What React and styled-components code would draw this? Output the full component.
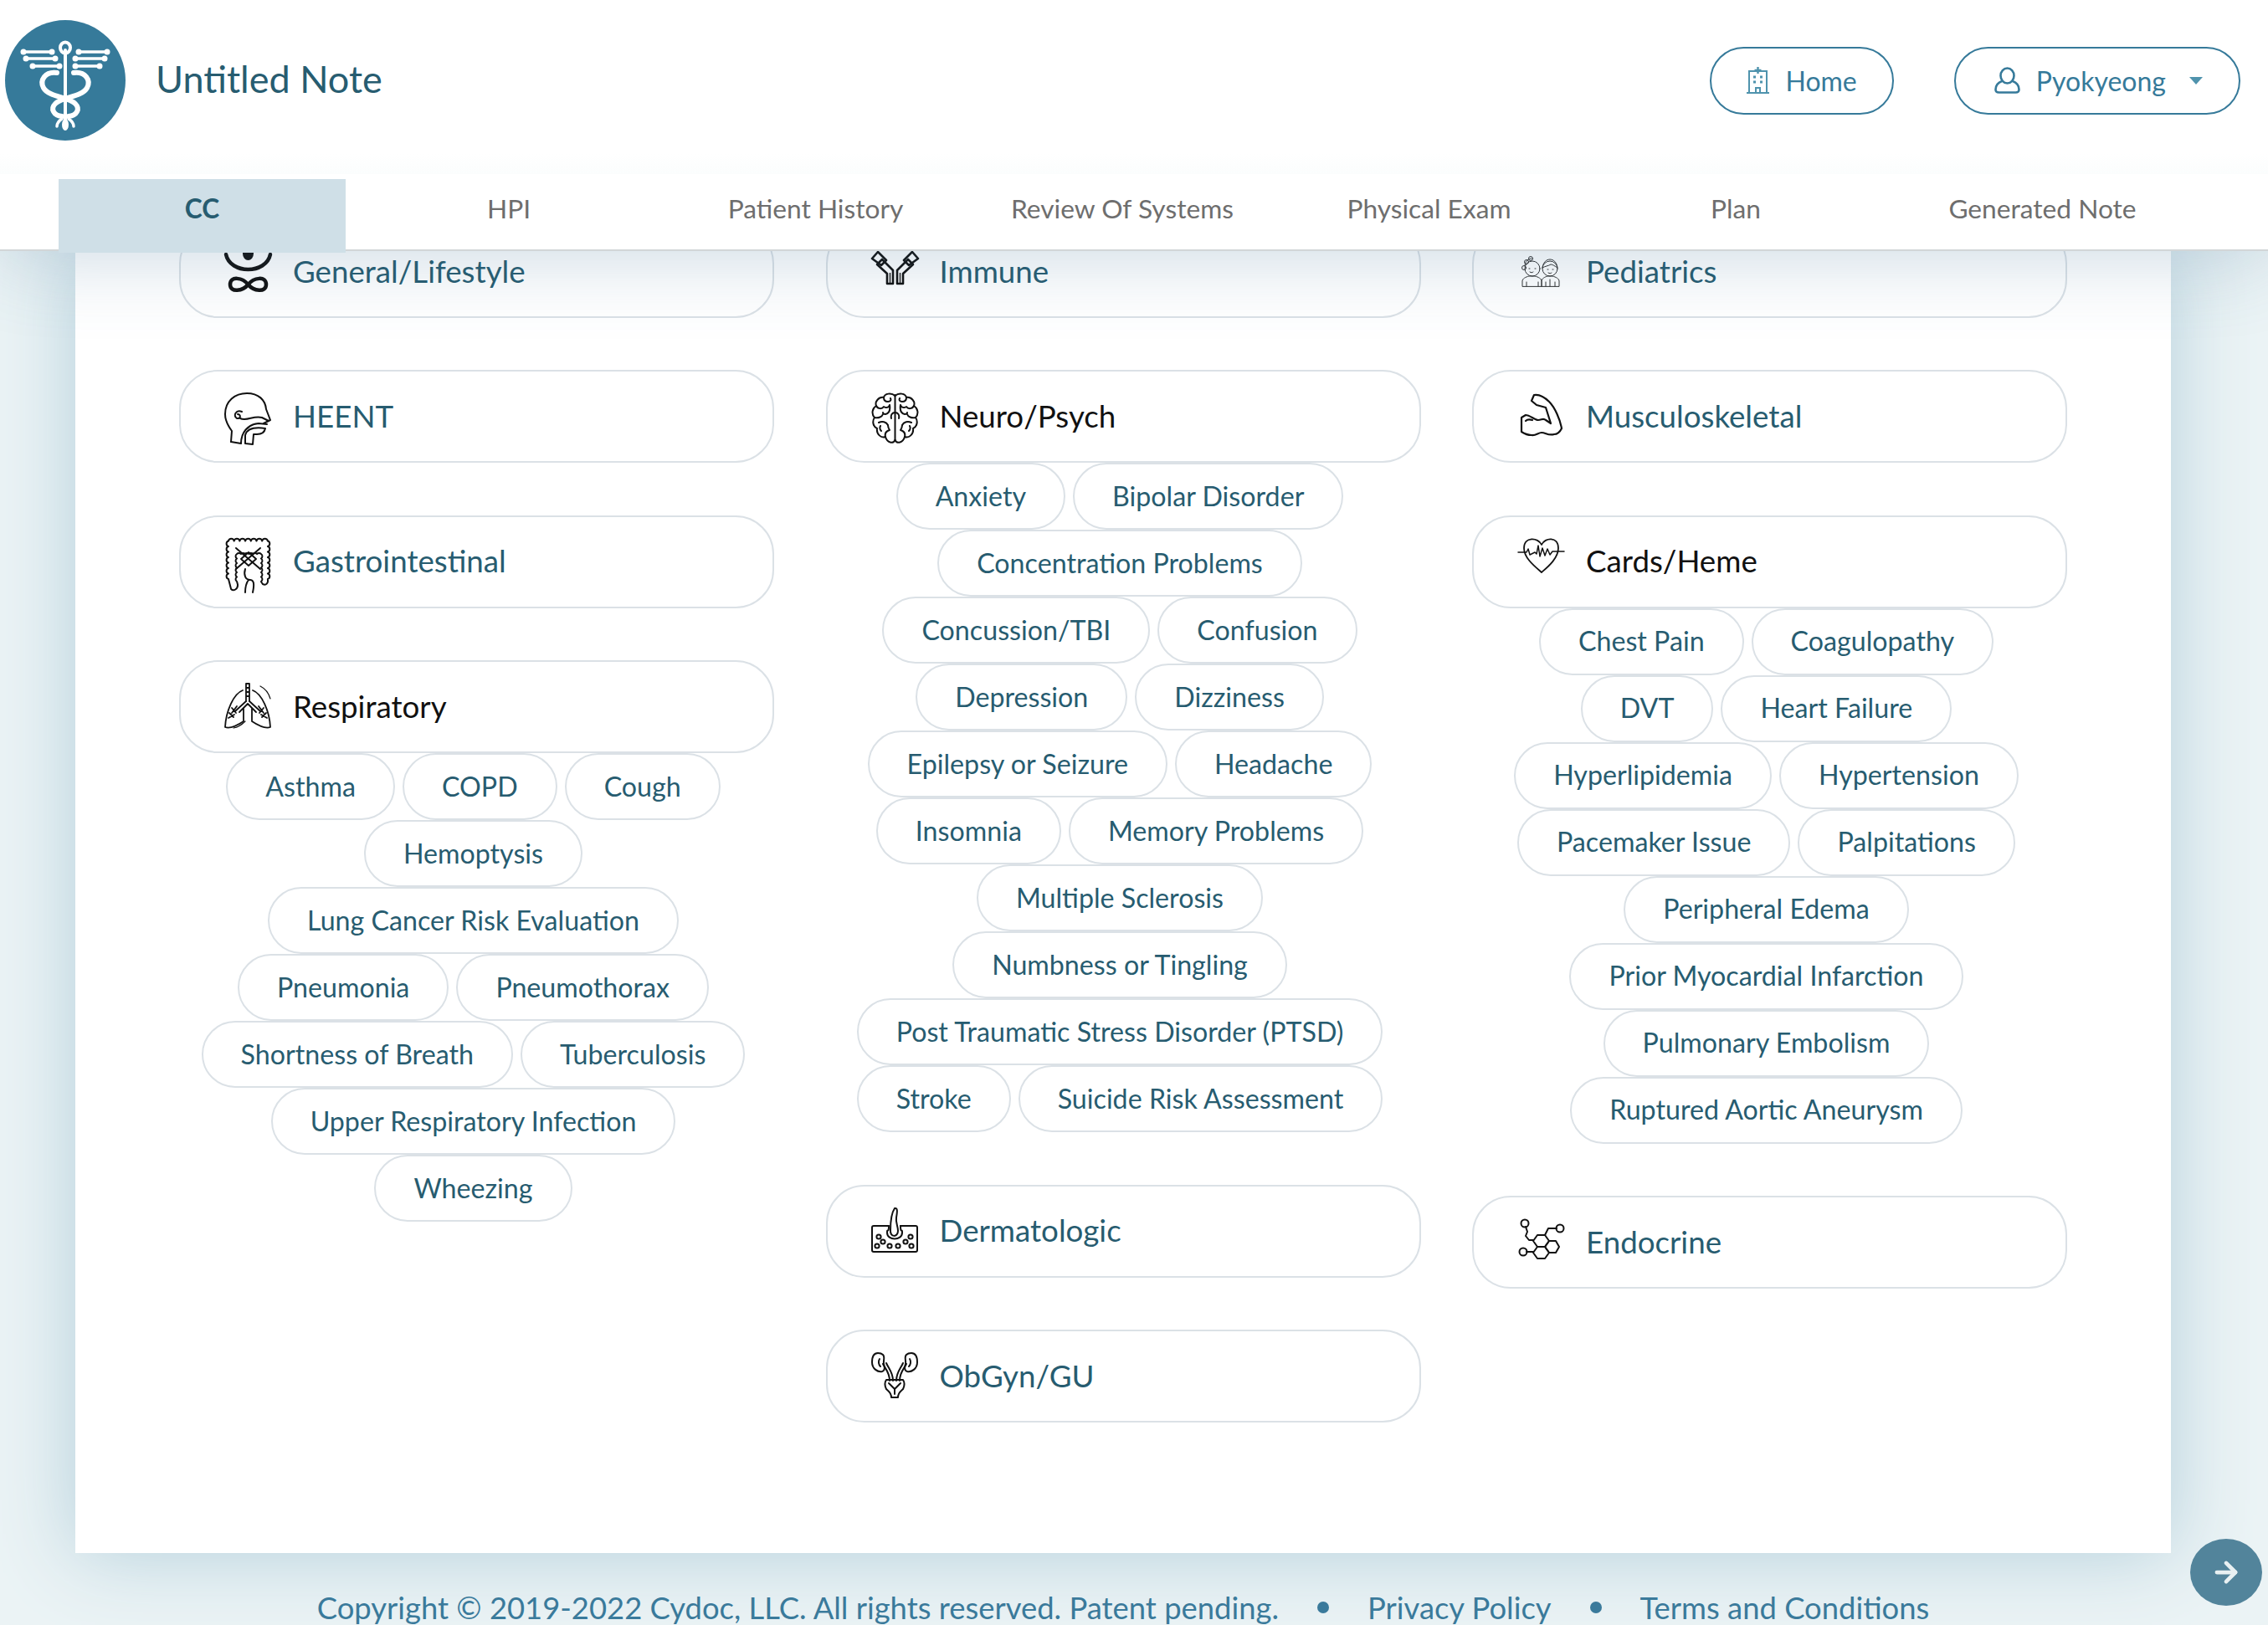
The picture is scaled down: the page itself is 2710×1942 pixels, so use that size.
import React from 'react';
import styled, { createGlobalStyle } from 'styled-components';
import { ArrowRight } from 'lucide-react';

const GlobalStyle = createGlobalStyle`
  html, body {
    margin: 0;
    padding: 0;
    background: #ebf3f5;
    font-family: "Lato", "Open Sans", sans-serif;
  }
`;

const Page = styled.div`
  position: relative;
  display: flex;
  flex-direction: column;
  height: 1942px;
  overflow: hidden;
  background: #ebf3f5;
`;

const Top = styled.header`
  position: relative;
  z-index: 2;
  background: #fff;
  border-bottom: 2px solid #d2d6d8;
  box-shadow: 0 0 100px rgba(60, 110, 150, 0.3);
`;

const Brand = styled.div`
  display: flex;
  align-items: center;
  height: 208px;
  padding: 0 33px 16px 6px;
  box-sizing: border-box;
  background: linear-gradient(#fff 88%, #fbfdfd);
`;

const Title = styled.div`
  margin: 0 auto 4px 36px;
  font-size: 45px;
  color: #275c70;
  white-space: nowrap;
`;

const NavButton = styled.button`
  display: flex;
  align-items: center;
  height: 81px;
  margin-left: ${(p) => p.$gap}px;
  padding: 0 ${(p) => p.$right}px 0 ${(p) => p.$left}px;
  box-sizing: border-box;
  background: #fff;
  border: 2px solid #367a9a;
  border-radius: 41px;
  font: inherit;
  font-size: 32px;
  color: #367a9a;
`;

const NavLabel = styled.span`
  margin-left: 19px;
`;

const Caret = styled.span`
  width: 0;
  height: 0;
  margin-left: 28px;
  border-left: 8px solid transparent;
  border-right: 8px solid transparent;
  border-top: 9px solid #4f93ad;
`;

const TabBar = styled.nav`
  display: grid;
  grid-template-columns: repeat(7, 343px);
  column-gap: 23.5px;
  height: 90px;
  padding-left: 70px;
`;

const Tab = styled.div`
  display: flex;
  align-items: center;
  justify-content: center;
  height: 88px;
  margin-top: 6px;
  padding-bottom: 19px;
  box-sizing: border-box;
  font-size: 31.7px;
  font-weight: ${(p) => (p.$active ? 700 : 400)};
  color: ${(p) => (p.$active ? '#275c70' : '#6e6e6e')};
  background: ${(p) => (p.$active ? '#cfdfe7' : 'transparent')};
`;

const Body = styled.main`
  padding: 0 116px 0 90px;
`;

const Panel = styled.section`
  display: grid;
  grid-template-columns: repeat(3, 711px);
  column-gap: 61.5px;
  height: 1556px;
  padding: 0 124px;
  box-sizing: border-box;
  background: #fff;
  box-shadow: 0 0 90px #b3cfdb;
  overflow: hidden;
`;

const Column = styled.div`
  display: flex;
  flex-direction: column;
  margin-top: -31px;
`;

const Group = styled.div`
  margin-bottom: 62.4px;
`;

const Category = styled.div`
  display: flex;
  align-items: center;
  height: 111px;
  padding: 0 0 2px 53px;
  box-sizing: border-box;
  border: 2px solid #dbe1e6;
  border-radius: 46px;
  font-size: 36.7px;
  color: ${(p) => (p.$open ? '#111' : '#275c70')};
`;

const IconBox = styled.svg`
  flex: none;
  width: 55px;
  height: 66px;
  margin: 11px 26px 0 0;
  overflow: visible;
  fill: none;
  stroke: #111;
  stroke-width: 2;
  stroke-linecap: round;
  stroke-linejoin: round;
`;

const ChipRow = styled.div`
  display: flex;
  justify-content: center;
  gap: 9px;
  padding-right: 8px;
`;

const Chip = styled.div`
  display: flex;
  align-items: center;
  height: 80px;
  padding: 0 45px 2px;
  box-sizing: border-box;
  border: 2px solid #dbe1e6;
  border-radius: 40px;
  font-size: 32.2px;
  color: #275c70;
  white-space: nowrap;
`;

const Footer = styled.footer`
  display: flex;
  align-items: center;
  justify-content: center;
  gap: 46px;
  padding: 44px 116px 0 90px;
  font-size: 36.4px;
  line-height: 42px;
  color: #3a7a9b;
  white-space: nowrap;
`;

const Dot = styled.span`
  width: 14px;
  height: 14px;
  border-radius: 50%;
  background: #3a7a9b;
`;

const NextButton = styled.button`
  position: absolute;
  left: 2617px;
  top: 1839px;
  display: flex;
  align-items: center;
  justify-content: center;
  width: 86px;
  height: 80px;
  padding: 0;
  border: none;
  border-radius: 50%;
  background: #52849b;
  color: #e8f0f2;
`;

const LogoMark = styled.svg`
  flex: none;
  width: 144px;
  height: 144px;
`;

const Logo = () => (
  <LogoMark viewBox="0 0 144 144">
    <circle cx="72" cy="72" r="72" fill="#367a9a" />
    <g stroke="#fff" fill="none" strokeLinecap="round">
      <path d="M72 36v92" strokeWidth="4" />
      <ellipse cx="72" cy="33" rx="6" ry="6.5" strokeWidth="4" />
      <path d="M22 38h34M25 46h35M33 55h32M88 38h34M84 46h35M84 55h29" strokeWidth="3.5" />
      <g fill="#fff" stroke="none">
        <circle cx="22" cy="38" r="3.5" /><circle cx="56" cy="38" r="3.5" />
        <circle cx="25" cy="46" r="3.5" /><circle cx="60" cy="46" r="3.5" />
        <circle cx="33" cy="55" r="3.5" /><circle cx="65" cy="55" r="3.5" />
        <circle cx="88" cy="38" r="3.5" /><circle cx="122" cy="38" r="3.5" />
        <circle cx="84" cy="46" r="3.5" /><circle cx="119" cy="46" r="3.5" />
        <circle cx="84" cy="55" r="3.5" /><circle cx="113" cy="55" r="3.5" />
      </g>
      <path d="M62 63C48 61 41 72 46 81C52 92 76 92 84 100C90 106 86 114 76 115" strokeWidth="6" />
      <path d="M82 63C96 61 103 72 98 81C92 92 68 92 60 100C54 106 58 114 68 115" strokeWidth="6" />
      <path d="M62 127c0-4 3-7 6-9M82 127c0-4-3-7-6-9" strokeWidth="3.5" />
    </g>
    <ellipse cx="72" cy="125" rx="4" ry="7" fill="#fff" />
  </LogoMark>
);

const HospitalIcon = () => (
  <svg width="27" height="32" viewBox="0 0 27 32" fill="none" stroke="#4f93ad" strokeWidth="2">
    <path d="M3 31V5h21v26M0 31h27M11 31v-6h5v6" />
    <path d="M13.5 0v8M9.5 4h8" strokeWidth="2.4" />
    <path d="M8 12h3M16 12h3M8 18h3M16 18h3" strokeWidth="3" />
  </svg>
);

const UserIcon = () => (
  <svg width="31" height="32" viewBox="0 0 31 32" fill="none" stroke="#367a9a" strokeWidth="2.6">
    <ellipse cx="15.5" cy="10.5" rx="8" ry="9" />
    <path d="M9 17C4 19 1.500 22 1.500 27c0 2.500 1.500 3.500 4 3.500h20c2.500 0 4-1 4-3.500 0-5-2.500-8-7.500-10" />
  </svg>
);

const scallops = (arc, count) => arc.repeat(count);

const brainHalf = (
  <>
    <path d="M27.500 4C23 0 15 1 14 6C8 5 3 11 5 16C0 19 -1 26 3 30C0 34 1 41 6 43C5 50 11 55 16 53C18 60 25 62 27.500 57" />
    <path d="M14 6C14 9 16 11 19 11C22 11 23 9 22 7M5 16C7 20 12 20 14 17C17 19 20 18 21 15M21 15C22 21 20 25 16 26C14 26 13 25 13 24M3 30C8 31 12 29 13 26M8 36C12 34 17 35 19 39M16 53C15 49 17 46 21 45C19 42 19 41 19 39M27.500 24C24 24 22 27 23 31M11 46C9 44 9 42 10 40" />
  </>
);

const icons = {
  general: (
    <g>
      <ellipse cx="27.500" cy="7" rx="6.500" ry="8" fill="#111" stroke="none" />
      <path d="M1 8C6 32 49 32 54 8" strokeWidth="4.500" />
      <path d="M27.500 44C21 36 6 33 6 44C6 54 21 52 27.500 44C34 36 49 33 49 44C49 54 34 52 27.500 44Z" strokeWidth="4.500" />
    </g>
  ),
  immune: (
    <g strokeWidth="2.600" strokeLinecap="butt">
      <path d="M18 43h7V27L12 14L6 20L18 31Z" />
      <path d="M37 43h-7V27L43 14L49 20L37 31Z" />
      <path d="M21.500 43V30M33.500 43V30" strokeWidth="1.400" />
      <path d="M0 13L7 5L17 15L11 21Z" />
      <path d="M55 13L48 5L38 15L44 21Z" />
    </g>
  ),
  pediatrics: (
    <g strokeWidth="1" stroke="#333">
      <circle cx="17" cy="25" r="9" />
      <path d="M8 22c0-6 4-9 8-9" />
      <circle cx="15" cy="13" r="2.500" /><circle cx="10" cy="17" r="2.500" /><circle cx="7" cy="24" r="2.500" />
      <path d="M13 25h1M20 25h1M14 29c1.500 1 3 1 4 0" />
      <path d="M5 46V40c0-3 4-5 8-6h7c4 1 8 3 8 6v6zM10 46v-5M24 46v-5" />
      <circle cx="38" cy="25" r="9" />
      <path d="M29 24c1-7 5-10 9-10s8 3 9 10c-3-2-6-4-8-4-3 2-7 2-10 4z" />
      <path d="M35 26h1M41 26h1M36 30c1.500 1 3 1 4 0" />
      <path d="M28 46V40c0-3 4-5 7-6h6c4 1 8 3 8 6v6zM38 38v8M33 46v-5M44 46v-5" />
    </g>
  ),
  heent: (
    <g>
      <path d="M7 59L8 46C2 38 0 32 0 26C0 10 12 1 26 1C40 1 48 9 49 20L54 33L46 37" />
      <path d="M7 59L19 61C19 48 27 38 40 37L50 38" />
      <path d="M18 31C26 35 34 27 44 30L52 34" />
      <path d="M24 61V51C26 44 34 41 48 43C47 48 44 50 38 50H34L33 62Z" />
      <path d="M20 23C13 20 9 28 14 31C19 32 19 26 15 26" />
    </g>
  ),
  gastro: (
    <g strokeWidth="2">
      <path d={`M4 49${scallops('a3.400 3.400 0 0 1 0-6.500', 7)}${scallops('a3.400 3.400 0 0 1 6.700 0', 7)}${scallops('a3.400 3.400 0 0 1 0 6.500', 7)}c1 5-2 8-6 6l-2-3${scallops('a3.200 3.200 0 0 0 0-5.500', 6)}${scallops('a3.200 3.200 0 0 0-4.800 0', 6)}${scallops('a3.200 3.200 0 0 0 0 5.500', 6)}l1 4c0 5-5 8-8 5z`} />
      <path d="M13 12L42 37M42 12L13 37M19 25L28 17L37 25L28 33Z" />
      <path d="M24 37C22 44 24 50 30 50C36 50 34 60 33 65M28 50C25 54 24 60 24 65" />
    </g>
  ),
  respiratory: (
    <g strokeWidth="1.800">
      <path d="M25 22V1h4v21M25 6h4M25 11h4M25 16h4" />
      <path d="M21 9C10 13 1 34 0 53C6 55 16 50 22 46V31" />
      <path d="M33 9C44 13 53 34 54 53C48 55 38 50 32 46V31" />
      <path d="M25 22L12 34M29 22L42 34M27 25L17 35M27 25L37 35" />
      <path d="M14 28L8 36M8 30L13 36M5 36L10 41M4 42L11 38" />
      <path d="M40 28L46 36M46 30L41 36M49 36L44 41M50 42L43 38" />
      <path d="M42 4C48 7 52 12 54 19M10 54C16 53 20 50 24 46" strokeWidth="1.200" />
    </g>
  ),
  neuro: (
    <g strokeWidth="2">
      <path d="M27.500 3V57" />
      {brainHalf}
      <g transform="translate(55 0) scale(-1 1)">{brainHalf}</g>
    </g>
  ),
  muscle: (
    <g strokeWidth="2.200">
      <path d="M4 47V30L9 27C14 27 20 33 24 33C28 33 30 30 33 33L39 37L33 18L22 15L16 10L19 3C25 2 31 5 37 11C44 18 50 32 52 43C50 47 47 50 43 50C36 52 33 48 28 48C24 48 21 52 16 51C11 51 7 49 4 47Z" />
      <path d="M9 34C11 32 14 32 17 33" />
    </g>
  ),
  cards: (
    <g strokeWidth="1.800">
      <path d="M28 8C24 -1 7 -2 7 12C7 24 20 34 28 41C36 34 48 24 48 12C48 -2 32 -1 28 8Z" />
      <path d="M0 17H10L12 13L14 20L20 17L22 19L24 9L26 22L29 12L32 21L35 13L38 20L41 16H55" strokeWidth="1.500" />
    </g>
  ),
  derm: (
    <g strokeWidth="2">
      <path d="M20 22H2C1 22 0 23 0 24V51C0 52 1 53 2 53H52C53 53 54 52 54 51V24C54 23 53 22 52 22H34" />
      <path d="M20 22C20 32 18 24 18 30C18 40 36 40 36 30C36 24 34 32 34 22" />
      <path d="M22 27C22 15 23 7 27 1C31 0 30 6 29 12C28 18 31 22 31 28C31 36 21 36 22 27Z" />
      <circle cx="8" cy="35" r="2.600" /><circle cx="13" cy="41" r="2.600" /><circle cx="6" cy="46" r="2.600" />
      <circle cx="21" cy="46" r="2.600" /><circle cx="31" cy="46" r="2.600" /><circle cx="40" cy="41" r="2.600" />
      <circle cx="46" cy="35" r="2.600" /><circle cx="47" cy="46" r="2.600" />
    </g>
  ),
  obgyn: (
    <g strokeWidth="2">
      <path d="M13 14C16 20 21 24 21 34M41 14C38 20 33 24 33 34M17 13C20 20 25 24 25 34M37 13C34 20 29 24 29 34" />
      <path d="M7 1C1 1 0 8 0 12C0 20 7 24 12 23C16 22 15 17 14 14C13 11 16 6 13 3C12 2 9 1 7 1Z" />
      <path d="M47 1C53 1 54 8 54 12C54 20 47 24 42 23C38 22 39 17 40 14C41 11 38 6 41 3C42 2 45 1 47 1Z" />
      <path d="M9 8C7 11 8 15 10 17M45 8C47 11 46 15 44 17" />
      <path d="M17 33H37C39 36 39 40 37 44C34 47 31 48 31 54H23C23 48 20 47 17 44C15 40 15 36 17 33Z" />
      <path d="M20 37L27 44L34 37M27 44V50" />
    </g>
  ),
  endocrine: (
    <g strokeWidth="2">
      <circle cx="8" cy="6" r="4.500" /><circle cx="50" cy="12" r="4.500" /><circle cx="6" cy="40" r="4.500" />
      <path d="M23 20H32L37 27L32 34H23L18 27Z" />
      <path d="M32 34L37 27H45L49 34L45 41H37Z" />
      <path d="M23 34H32L37 41L32 48H23L18 41Z" />
      <path d="M9 10L11 16L9 21L13 26H18M32 20L36 12H46M10 40H18" />
    </g>
  ),
};

const columns = [
  [
    { name: 'General/Lifestyle', icon: 'general' },
    { name: 'HEENT', icon: 'heent' },
    { name: 'Gastrointestinal', icon: 'gastro' },
    {
      name: 'Respiratory',
      icon: 'respiratory',
      rows: [
        ['Asthma', 'COPD', 'Cough'],
        ['Hemoptysis'],
        ['Lung Cancer Risk Evaluation'],
        ['Pneumonia', 'Pneumothorax'],
        ['Shortness of Breath', 'Tuberculosis'],
        ['Upper Respiratory Infection'],
        ['Wheezing'],
      ],
    },
  ],
  [
    { name: 'Immune', icon: 'immune' },
    {
      name: 'Neuro/Psych',
      icon: 'neuro',
      rows: [
        ['Anxiety', 'Bipolar Disorder'],
        ['Concentration Problems'],
        ['Concussion/TBI', 'Confusion'],
        ['Depression', 'Dizziness'],
        ['Epilepsy or Seizure', 'Headache'],
        ['Insomnia', 'Memory Problems'],
        ['Multiple Sclerosis'],
        ['Numbness or Tingling'],
        ['Post Traumatic Stress Disorder (PTSD)'],
        ['Stroke', 'Suicide Risk Assessment'],
      ],
    },
    { name: 'Dermatologic', icon: 'derm' },
    { name: 'ObGyn/GU', icon: 'obgyn' },
  ],
  [
    { name: 'Pediatrics', icon: 'pediatrics' },
    { name: 'Musculoskeletal', icon: 'muscle' },
    {
      name: 'Cards/Heme',
      icon: 'cards',
      rows: [
        ['Chest Pain', 'Coagulopathy'],
        ['DVT', 'Heart Failure'],
        ['Hyperlipidemia', 'Hypertension'],
        ['Pacemaker Issue', 'Palpitations'],
        ['Peripheral Edema'],
        ['Prior Myocardial Infarction'],
        ['Pulmonary Embolism'],
        ['Ruptured Aortic Aneurysm'],
      ],
    },
    { name: 'Endocrine', icon: 'endocrine' },
  ],
];

const tabs = ['CC', 'HPI', 'Patient History', 'Review Of Systems', 'Physical Exam', 'Plan', 'Generated Note'];

const App = () => {
  return (
    <Page>
      <GlobalStyle />
      <Top>
        <Brand>
          <Logo />
          <Title>Untitled Note</Title>
          <NavButton $gap={0} $left={42} $right={42}>
            <HospitalIcon />
            <NavLabel>Home</NavLabel>
          </NavButton>
          <NavButton $gap={72} $left={46} $right={43}>
            <UserIcon />
            <NavLabel>Pyokyeong</NavLabel>
            <Caret />
          </NavButton>
        </Brand>
        <TabBar>
          {tabs.map((tab, i) => (
            <Tab key={tab} $active={i === 0}>{tab}</Tab>
          ))}
        </TabBar>
      </Top>
      <Body>
        <Panel>
          {columns.map((groups, c) => (
            <Column key={c}>
              {groups.map((group) => (
                <Group key={group.name}>
                  <Category $open={!!group.rows}>
                    <IconBox viewBox="0 0 55 66">{icons[group.icon]}</IconBox>
                    {group.name}
                  </Category>
                  {group.rows && group.rows.map((row) => (
                    <ChipRow key={row[0]}>
                      {row.map((item) => <Chip key={item}>{item}</Chip>)}
                    </ChipRow>
                  ))}
                </Group>
              ))}
            </Column>
          ))}
        </Panel>
      </Body>
      <Footer>
        <span>Copyright © 2019-2022 Cydoc, LLC. All rights reserved. Patent pending.</span>
        <Dot />
        <span>Privacy Policy</span>
        <Dot />
        <span>Terms and Conditions</span>
      </Footer>
      <NextButton>
        <ArrowRight size={38} strokeWidth={3} />
      </NextButton>
    </Page>
  );
};

export default App;
